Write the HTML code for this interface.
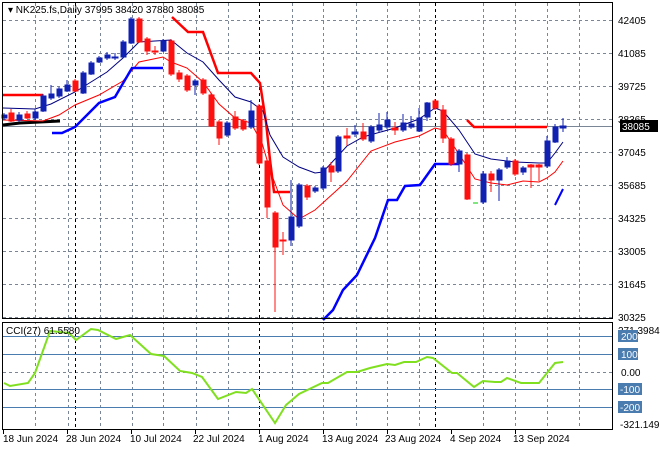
<!DOCTYPE html>
<html><head><style>
html,body{margin:0;padding:0;background:#fff;}
svg{display:block;font-family:"Liberation Sans",sans-serif;}
</style></head><body>
<svg width="660" height="450" viewBox="0 0 660 450" xmlns="http://www.w3.org/2000/svg">
<rect width="660" height="450" fill="#fff"/>
<g stroke="#7a8696" stroke-width="1" stroke-dasharray="3,3" shape-rendering="crispEdges">
<line x1="3" y1="20.5" x2="612" y2="20.5"/><line x1="3" y1="53.5" x2="612" y2="53.5"/><line x1="3" y1="86.5" x2="612" y2="86.5"/><line x1="3" y1="119.5" x2="612" y2="119.5"/><line x1="3" y1="152.5" x2="612" y2="152.5"/><line x1="3" y1="185.5" x2="612" y2="185.5"/><line x1="3" y1="218.5" x2="612" y2="218.5"/><line x1="3" y1="251.5" x2="612" y2="251.5"/><line x1="3" y1="284.5" x2="612" y2="284.5"/><line x1="3" y1="317.5" x2="612" y2="317.5"/>
<line x1="3" y1="372.5" x2="612" y2="372.5"/>
</g>
<g id="vg" stroke="#7a8696" stroke-width="1" stroke-dasharray="3,3" shape-rendering="crispEdges">
<line x1="35.5" y1="3" x2="35.5" y2="430"/><line x1="68.5" y1="3" x2="68.5" y2="430"/><line x1="100.5" y1="3" x2="100.5" y2="430"/><line x1="132.5" y1="3" x2="132.5" y2="430"/><line x1="163.5" y1="3" x2="163.5" y2="430"/><line x1="196.5" y1="3" x2="196.5" y2="430"/><line x1="228.5" y1="3" x2="228.5" y2="430"/><line x1="292.5" y1="3" x2="292.5" y2="430"/><line x1="323.5" y1="3" x2="323.5" y2="430"/><line x1="356.5" y1="3" x2="356.5" y2="430"/><line x1="387.5" y1="3" x2="387.5" y2="430"/><line x1="419.5" y1="3" x2="419.5" y2="430"/><line x1="483.5" y1="3" x2="483.5" y2="430"/><line x1="515.5" y1="3" x2="515.5" y2="430"/><line x1="547.5" y1="3" x2="547.5" y2="430"/><line x1="579.5" y1="3" x2="579.5" y2="430"/>
</g>
<rect x="3" y="319" width="609" height="3" fill="#fff"/>
<g stroke="#000" stroke-width="1" stroke-dasharray="3,3" shape-rendering="crispEdges">
<line x1="75.5" y1="3" x2="75.5" y2="318"/><line x1="259.5" y1="3" x2="259.5" y2="318"/><line x1="435.5" y1="3" x2="435.5" y2="318"/>
<line x1="75.5" y1="322" x2="75.5" y2="430"/><line x1="259.5" y1="322" x2="259.5" y2="430"/><line x1="435.5" y1="322" x2="435.5" y2="430"/>
</g>
<line x1="3" y1="126.5" x2="612" y2="126.5" stroke="#7a8696" shape-rendering="crispEdges"/>
<polyline fill="none" stroke="#000" stroke-width="3" points="3,125 20,123 60,121"/>
<polyline fill="none" stroke="#ff0000" stroke-width="2.5" points="3,95 43,95"/>
<polyline fill="none" stroke="#ff0000" stroke-width="2.5" points="172,17 188,32 203,32 218,73 251,73 260,83 266,122 270,160 274,192 290,192"/>
<polyline fill="none" stroke="#ff0000" stroke-width="2.5" points="467,120 474,127 547,127"/>
<polyline fill="none" stroke="#000080" stroke-width="1" points="3,108 35,109 51,104 75,92 107,72 123,58 139,42 171,40 187,53 203,62 219,80 235,97 251,102 263,111 270,135 283,157 299,167 315,173 323,172 347,146 363,137 395,128 419,119 435,108 443,111 459,130 475,154 491,159 515,162 539,163 547,163 555,153 563,142"/>
<polyline fill="none" stroke="#ff0000" stroke-width="1" points="3,120 43,121 59,115 75,105 99,95 123,81 139,62 163,57 171,62 187,68 203,82 219,104 235,118 251,123 262,143 270,170 283,205 299,219 315,210 347,181 371,151 395,142 419,136 435,128 443,130 459,154 475,179 491,183 507,185 523,181 539,182 547,178 555,172 563,161"/>
<polyline fill="none" stroke="#0000ff" stroke-width="2.5" points="52,133 62,133 75,127 85,117 99,103 115,97 132,68 163,68"/>
<polyline fill="none" stroke="#0000ff" stroke-width="2.5" points="323,320 333,310 343,290 357,275 375,238 388,200 397,200 405,186 420,185 435,164 459,164"/>
<polyline fill="none" stroke="#0000ff" stroke-width="2" points="555,205 563,189"/>
<line x1="473" y1="203" x2="478" y2="203" stroke="#00cc00"/>
<g shape-rendering="crispEdges">
<g stroke="#1020b0" fill="#1020b0">
<line x1="4" y1="113" x2="4" y2="120"/><rect x="2" y="115" width="5" height="3"/>
<line x1="19" y1="112" x2="19" y2="122"/><rect x="17" y="115" width="5" height="5"/>
<line x1="35" y1="109" x2="35" y2="120"/><rect x="33" y="112" width="5" height="6"/>
<line x1="43" y1="94" x2="43" y2="112"/><rect x="41" y="96" width="5" height="15"/>
<line x1="51" y1="85" x2="51" y2="100"/><rect x="49" y="94" width="5" height="4"/>
<line x1="59" y1="87" x2="59" y2="98"/><rect x="57" y="89" width="5" height="7"/>
<line x1="67" y1="80" x2="67" y2="92"/><rect x="65" y="85" width="5" height="6"/>
<line x1="83" y1="71" x2="83" y2="94"/><rect x="81" y="73" width="5" height="20"/>
<line x1="91" y1="61" x2="91" y2="75"/><rect x="89" y="63" width="5" height="11"/>
<line x1="99" y1="56" x2="99" y2="63"/><rect x="97" y="58" width="5" height="4"/>
<line x1="107" y1="52" x2="107" y2="60"/><rect x="105" y="55" width="5" height="3"/>
<line x1="115" y1="53" x2="115" y2="60"/><rect x="112" y="57" width="6" height="1"/>
<line x1="123" y1="40" x2="123" y2="58"/><rect x="121" y="42" width="5" height="15"/>
<line x1="131" y1="17" x2="131" y2="44"/><rect x="129" y="19" width="5" height="24"/>
<line x1="163" y1="39" x2="163" y2="52"/><rect x="161" y="41" width="5" height="10"/>
<line x1="195" y1="79" x2="195" y2="95"/><rect x="193" y="81" width="5" height="4"/>
<line x1="227" y1="121" x2="227" y2="137"/><rect x="225" y="123" width="5" height="12"/>
<line x1="251" y1="100" x2="251" y2="129"/><rect x="249" y="111" width="5" height="16"/>
<line x1="291" y1="180" x2="291" y2="246"/><rect x="289" y="217" width="5" height="23"/>
<line x1="299" y1="183" x2="299" y2="228"/><rect x="297" y="185" width="5" height="41"/>
<line x1="315" y1="186" x2="315" y2="193"/><rect x="313" y="188" width="5" height="3"/>
<line x1="323" y1="166" x2="323" y2="190"/><rect x="321" y="168" width="5" height="20"/>
<line x1="338" y1="135" x2="338" y2="173"/><rect x="336" y="137" width="5" height="34"/>
<line x1="355" y1="125" x2="355" y2="137"/><rect x="352" y="132" width="6" height="2"/>
<line x1="371" y1="125" x2="371" y2="143"/><rect x="369" y="127" width="5" height="14"/>
<line x1="379" y1="113" x2="379" y2="132"/><rect x="377" y="125" width="5" height="5"/>
<line x1="387" y1="112" x2="387" y2="129"/><rect x="385" y="120" width="5" height="7"/>
<line x1="403" y1="114" x2="403" y2="132"/><rect x="401" y="123" width="5" height="7"/>
<line x1="411" y1="116" x2="411" y2="129"/><rect x="409" y="124" width="5" height="3"/>
<line x1="419" y1="108" x2="419" y2="132"/><rect x="417" y="118" width="5" height="13"/>
<line x1="427" y1="102" x2="427" y2="121"/><rect x="425" y="103" width="5" height="14"/>
<line x1="459" y1="149" x2="459" y2="172"/><rect x="457" y="151" width="5" height="13"/>
<line x1="483" y1="171" x2="483" y2="204"/><rect x="481" y="174" width="5" height="28"/>
<line x1="499" y1="168" x2="499" y2="201"/><rect x="497" y="170" width="5" height="10"/>
<line x1="507" y1="157" x2="507" y2="169"/><rect x="505" y="161" width="5" height="6"/>
<line x1="523" y1="166" x2="523" y2="175"/><rect x="521" y="168" width="5" height="4"/>
<line x1="547" y1="136" x2="547" y2="168"/><rect x="545" y="141" width="5" height="25"/>
<line x1="555" y1="124" x2="555" y2="143"/><rect x="553" y="127" width="5" height="15"/>
<line x1="563" y1="118" x2="563" y2="132"/><rect x="560" y="126" width="6" height="2"/>
</g>
<g stroke="#ff1010" fill="#ff1010">
<line x1="11" y1="109" x2="11" y2="122"/><rect x="9" y="113" width="5" height="8"/>
<line x1="27" y1="111" x2="27" y2="119"/><rect x="25" y="114" width="5" height="4"/>
<line x1="75" y1="79" x2="75" y2="92"/><rect x="73" y="81" width="5" height="10"/>
<line x1="139" y1="17" x2="139" y2="43"/><rect x="137" y="19" width="5" height="23"/>
<line x1="147" y1="37" x2="147" y2="55"/><rect x="145" y="39" width="5" height="12"/>
<line x1="155" y1="46" x2="155" y2="55"/><rect x="152" y="51" width="6" height="1"/>
<line x1="171" y1="39" x2="171" y2="76"/><rect x="169" y="41" width="5" height="33"/>
<line x1="179" y1="70" x2="179" y2="82"/><rect x="177" y="73" width="5" height="6"/>
<line x1="187" y1="74" x2="187" y2="92"/><rect x="185" y="76" width="5" height="14"/>
<line x1="203" y1="78" x2="203" y2="95"/><rect x="201" y="80" width="5" height="13"/>
<line x1="211" y1="93" x2="211" y2="127"/><rect x="209" y="95" width="5" height="31"/>
<line x1="219" y1="120" x2="219" y2="145"/><rect x="217" y="122" width="5" height="16"/>
<line x1="235" y1="111" x2="235" y2="130"/><rect x="233" y="117" width="5" height="11"/>
<line x1="243" y1="119" x2="243" y2="131"/><rect x="241" y="121" width="5" height="8"/>
<line x1="259" y1="104" x2="259" y2="165"/><rect x="257" y="106" width="5" height="57"/>
<line x1="267" y1="159" x2="267" y2="218"/><rect x="265" y="161" width="5" height="46"/>
<line x1="275" y1="211" x2="275" y2="312"/><rect x="273" y="213" width="5" height="34"/>
<line x1="283" y1="232" x2="283" y2="255"/><rect x="280" y="240" width="6" height="1"/>
<line x1="307" y1="184" x2="307" y2="200"/><rect x="305" y="186" width="5" height="11"/>
<line x1="331" y1="162" x2="331" y2="182"/><rect x="329" y="166" width="5" height="6"/>
<line x1="347" y1="128" x2="347" y2="146"/><rect x="344" y="136" width="6" height="2"/>
<line x1="363" y1="123" x2="363" y2="141"/><rect x="361" y="132" width="5" height="7"/>
<line x1="395" y1="122" x2="395" y2="135"/><rect x="392" y="128" width="6" height="2"/>
<line x1="435" y1="99" x2="435" y2="110"/><rect x="433" y="101" width="5" height="7"/>
<line x1="443" y1="105" x2="443" y2="143"/><rect x="441" y="110" width="5" height="28"/>
<line x1="451" y1="137" x2="451" y2="166"/><rect x="449" y="139" width="5" height="25"/>
<line x1="467" y1="153" x2="467" y2="200"/><rect x="465" y="155" width="5" height="44"/>
<line x1="491" y1="171" x2="491" y2="192"/><rect x="489" y="174" width="5" height="6"/>
<line x1="515" y1="159" x2="515" y2="176"/><rect x="513" y="161" width="5" height="13"/>
<line x1="531" y1="164" x2="531" y2="188"/><rect x="528" y="165" width="6" height="2"/>
<line x1="539" y1="164" x2="539" y2="181"/><rect x="536" y="165" width="6" height="2"/>
</g>
</g>
<rect x="2.5" y="2.5" width="610" height="316" fill="none" stroke="#000" shape-rendering="crispEdges"/>
<text x="8" y="13" font-size="10" fill="#000">▾ NK225.fs,Daily  37995 38420 37880 38085</text>
<g font-size="10" fill="#000">
<text x="618" y="24">42405</text><text x="618" y="57">41085</text><text x="618" y="90">39725</text><text x="618" y="123">38365</text><text x="618" y="156">37045</text><text x="618" y="189">35685</text><text x="618" y="222">34325</text><text x="618" y="255">33005</text><text x="618" y="288">31645</text><text x="618" y="321">30325</text>
</g>
<rect x="620" y="120" width="38" height="12" fill="#000"/>
<text x="622" y="130" font-size="10" fill="#fff">38085</text>
<g stroke="#4a7cb0" shape-rendering="crispEdges">
<line x1="3" y1="336.5" x2="612" y2="336.5"/><line x1="3" y1="354.5" x2="612" y2="354.5"/><line x1="3" y1="389.5" x2="612" y2="389.5"/><line x1="3" y1="407.5" x2="612" y2="407.5"/>
</g>
<polyline fill="none" stroke="#80e020" stroke-width="2" points="4,383 10,386 28,383 35,373 50,331 69,333 76,340 91,329 98,330 116,339 130,335 151,354 164,356 180,371 192,373 202,377 218,399 236,392 246,393 252,389 275,423 286,405 299,394 322,383 328,383 347,372 357,372 370,368 387,364 395,365 404,362 416,362 427,357 433,358 452,373 457,373 474,387 483,381 495,382 501,382 507,378 521,383 539,383 555,363 563,362"/>
<rect x="2.5" y="322.5" width="610" height="107" fill="none" stroke="#000" shape-rendering="crispEdges"/>
<text x="6" y="334" font-size="10" fill="#000">CCI(27) 61.5580</text>
<g font-size="10">
<text x="618" y="334" fill="#000">271.3984</text>
<rect x="618" y="330" width="20" height="12" fill="#4a7cb0"/><text x="621" y="340" fill="#fff">200</text>
<rect x="618" y="348" width="20" height="12" fill="#4a7cb0"/><text x="621" y="358" fill="#fff">100</text>
<text x="621" y="376" fill="#000">0.00</text>
<rect x="618" y="383" width="24" height="12" fill="#4a7cb0"/><text x="620" y="393" fill="#fff">-100</text>
<rect x="618" y="401" width="24" height="12" fill="#4a7cb0"/><text x="620" y="411" fill="#fff">-200</text>
<text x="620" y="428" fill="#000">-321.149</text>
</g>
<g font-size="10" fill="#000">
<text x="3" y="442">18 Jun 2024</text><text x="66" y="442">28 Jun 2024</text><text x="130" y="442">10 Jul 2024</text><text x="193" y="442">22 Jul 2024</text><text x="258" y="442">1 Aug 2024</text><text x="322" y="442">13 Aug 2024</text><text x="385" y="442">23 Aug 2024</text><text x="450" y="442">4 Sep 2024</text><text x="513" y="442">13 Sep 2024</text>
</g>
<g stroke="#000" shape-rendering="crispEdges">
<line x1="3.5" y1="430" x2="3.5" y2="434"/><line x1="67.5" y1="430" x2="67.5" y2="434"/><line x1="131.5" y1="430" x2="131.5" y2="434"/><line x1="195.5" y1="430" x2="195.5" y2="434"/><line x1="259.5" y1="430" x2="259.5" y2="434"/><line x1="323.5" y1="430" x2="323.5" y2="434"/><line x1="387.5" y1="430" x2="387.5" y2="434"/><line x1="451.5" y1="430" x2="451.5" y2="434"/><line x1="515.5" y1="430" x2="515.5" y2="434"/>
</g>
</svg>
</body></html>
